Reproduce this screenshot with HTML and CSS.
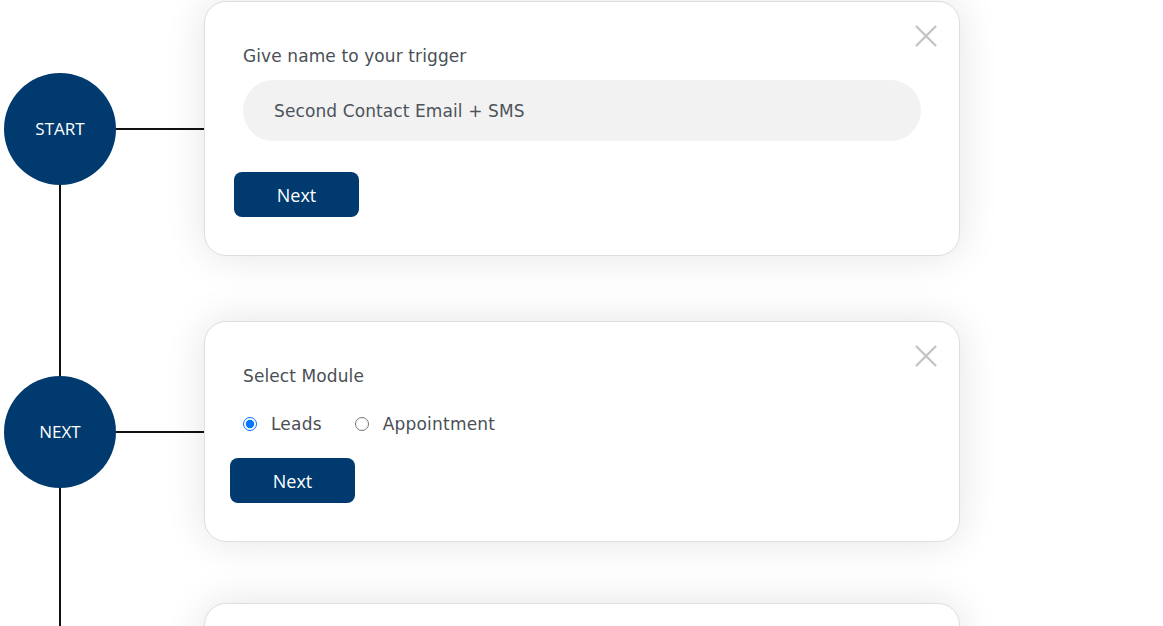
FILE: index.html
```html
<!DOCTYPE html>
<html lang="en">
<head>
<meta charset="utf-8">
<title>Trigger flow</title>
<link rel="stylesheet" href="styles.css">
</head>
<body>
<div class="flow">
  <div class="row">
    <div class="node">START</div>
    <div class="connector"></div>
    <div class="card card-name">
      <button class="close" aria-label="Close"><svg viewBox="0 0 22 22" width="22" height="22"><path d="M1 1L21 21M21 1L1 21" stroke="#c4c4c4" stroke-width="2.4" fill="none"/></svg></button>
      <div class="label">Give name to your trigger</div>
      <div class="input">Second Contact Email + SMS</div>
      <button class="btn btn-first">Next</button>
    </div>
  </div>
  <div class="row row-second">
    <div class="node">NEXT</div>
    <div class="connector"></div>
    <div class="card card-module">
      <button class="close" aria-label="Close"><svg viewBox="0 0 22 22" width="22" height="22"><path d="M1 1L21 21M21 1L1 21" stroke="#c4c4c4" stroke-width="2.4" fill="none"/></svg></button>
      <div class="label">Select Module</div>
      <div class="radios">
        <label class="radio"><input type="radio" name="mod" checked><span>Leads</span></label>
        <label class="radio"><input type="radio" name="mod"><span>Appointment</span></label>
      </div>
      <button class="btn btn-second">Next</button>
    </div>
  </div>
  <div class="row row-third">
    <div class="node-spacer"></div>
    <div class="connector-spacer"></div>
    <div class="card card-empty"></div>
  </div>
</div>
</body>
</html>
```
FILE: styles.css
```css
html, body {
  margin: 0;
  padding: 0;
  background: #ffffff;
  overflow: hidden;
}
body {
  font-family: "DejaVu Sans", "Open Sans", sans-serif;
  color: #474d55;
}
.flow {
  position: relative;
  display: flex;
  flex-direction: column;
  padding: 1px 0 0 4px;
}
.flow::before {
  content: "";
  position: absolute;
  left: 59px;
  top: 128px;
  width: 2px;
  height: 1000px;
  background: #111;
}
.row {
  display: flex;
  align-items: center;
}
.row-second { margin-top: 65px; }
.row-third { margin-top: 61px; }
.node {
  position: relative;
  z-index: 1;
  width: 112px;
  height: 112px;
  flex: none;
  border-radius: 50%;
  background: #003a6e;
  color: #fff;
  display: flex;
  align-items: center;
  justify-content: center;
  font-family: "Open Sans", "Noto Sans", sans-serif;
  font-size: 17px;
  font-weight: 500;
}
.node-spacer { width: 112px; flex: none; }
.connector {
  width: 88px;
  height: 2px;
  flex: none;
  background: #111;
}
.connector-spacer { width: 88px; flex: none; }
.card {
  position: relative;
  width: 756px;
  box-sizing: border-box;
  flex: none;
  background: #fff;
  border: 1px solid #dedede;
  border-radius: 22px;
  box-shadow: 0 0 40px rgba(0, 0, 0, 0.11);
  padding: 42px 38px 38px 38px;
}
.card-empty { height: 120px; }
.close {
  position: absolute;
  top: 23px;
  right: 22px;
  padding: 0;
  border: 0;
  background: none;
  width: 22px;
  height: 22px;
  line-height: 0;
}
.label {
  font-size: 17px;
  line-height: 24px;
  color: #4a4f56;
  letter-spacing: 0.1px;
}
.input {
  margin-top: 12px;
  height: 61px;
  border-radius: 31px;
  background: #f2f2f2;
  display: flex;
  align-items: center;
  padding-left: 31px;
  font-size: 17px;
  color: #4d535a;
  letter-spacing: 0.1px;
}
.btn {
  display: block;
  width: 125px;
  height: 45px;
  border: 0;
  border-radius: 8px;
  background: #003a6e;
  color: #fff;
  font-family: "Open Sans", "Noto Sans", sans-serif;
  font-size: 18px;
  font-weight: 500;
}
.btn-first { margin: 31px 0 0 -9px; }
.btn-second { margin: 22px 0 0 -13px; }
.radios {
  margin-top: 24px;
  display: flex;
  gap: 33px;
  height: 24px;
  align-items: center;
}
.radio {
  display: flex;
  align-items: center;
  gap: 14px;
  font-size: 17px;
  color: #4a4f56;
  letter-spacing: 0.2px;
}
.radio input {
  margin: 0;
  width: 14px;
  height: 14px;
}
```
